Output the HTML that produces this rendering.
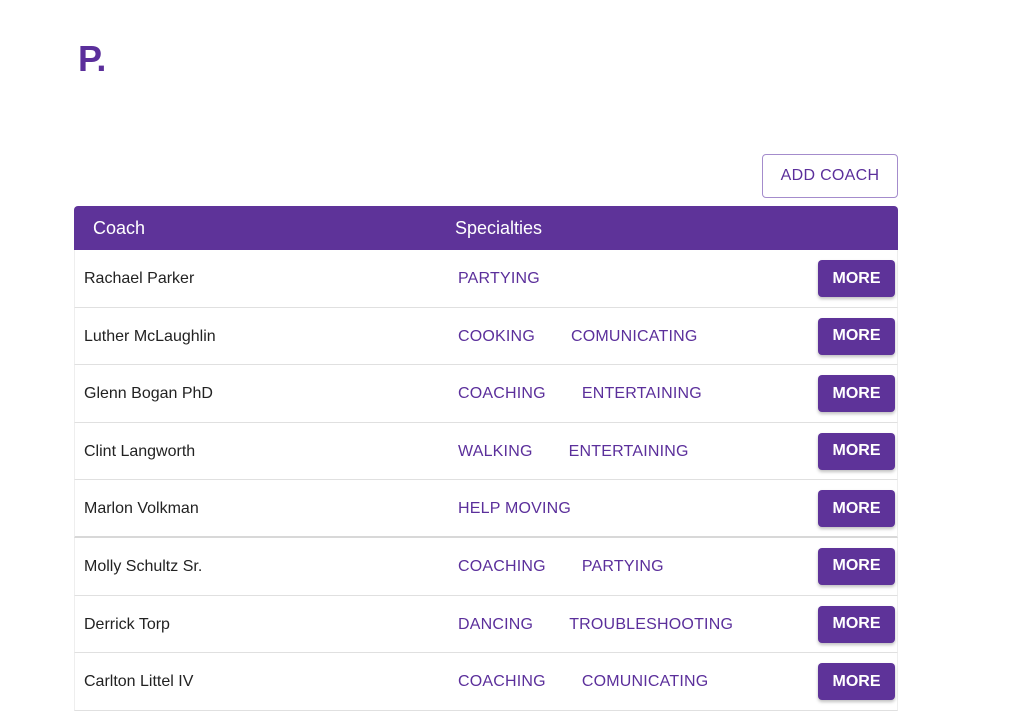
<!DOCTYPE html>
<html><head><style>
body{margin:0;background:#fff;font-family:"Liberation Sans",sans-serif;width:1009px;height:696px;overflow:hidden;position:relative}
.logo{position:absolute;left:78px;top:38px;font-size:36px;font-weight:bold;color:#5b2f9b;letter-spacing:-1px}
.add{position:absolute;left:762px;top:154px;border:1px solid #a48ccc;border-radius:4px;box-sizing:border-box;color:#5b2f9b;font-size:16px;letter-spacing:.3px;display:flex;align-items:center;justify-content:center;width:136px;height:44px}
.tbl{position:absolute;left:74px;top:206px;width:824px}
.hd{height:44px;background:#5e3399;border-radius:4px 4px 0 0;color:#fff;font-size:18px;position:relative}
.hd span{position:absolute;top:12px}
.row{height:56.6px;border-bottom:1px solid #e0e0e0;border-left:1px solid #eee;border-right:1px solid #eee;position:relative}
.nm{position:absolute;left:9px;top:20px;font-size:16px;color:#222}
.sp{position:absolute;left:383px;top:20px;display:flex;gap:36px;color:#5b2f9b;font-size:16px;letter-spacing:.2px}
.mb{position:absolute;left:743px;top:10px;width:77px;height:37px;background:#5e3399;border-radius:4px;color:#fff;font-weight:bold;font-size:16px;display:flex;align-items:center;justify-content:center;box-shadow:0 2px 3px rgba(0,0,0,.25)}
</style></head><body>
<div class="logo">P.</div>
<div class="add">ADD COACH</div>
<div class="tbl">
<div class="hd"><span style="left:19px">Coach</span><span style="left:381px">Specialties</span></div>
<div class="row"><div class="nm">Rachael Parker</div><div class="sp"><span>PARTYING</span></div><div class="mb">MORE</div></div>
<div class="row"><div class="nm">Luther McLaughlin</div><div class="sp"><span>COOKING</span><span>COMUNICATING</span></div><div class="mb">MORE</div></div>
<div class="row"><div class="nm">Glenn Bogan PhD</div><div class="sp"><span>COACHING</span><span>ENTERTAINING</span></div><div class="mb">MORE</div></div>
<div class="row"><div class="nm">Clint Langworth</div><div class="sp"><span>WALKING</span><span>ENTERTAINING</span></div><div class="mb">MORE</div></div>
<div class="row" style="border-bottom:2px solid #d8d8d8;height:55.6px"><div class="nm">Marlon Volkman</div><div class="sp"><span>HELP MOVING</span></div><div class="mb">MORE</div></div>
<div class="row"><div class="nm">Molly Schultz Sr.</div><div class="sp"><span>COACHING</span><span>PARTYING</span></div><div class="mb">MORE</div></div>
<div class="row"><div class="nm">Derrick Torp</div><div class="sp"><span>DANCING</span><span>TROUBLESHOOTING</span></div><div class="mb">MORE</div></div>
<div class="row"><div class="nm">Carlton Littel IV</div><div class="sp"><span>COACHING</span><span>COMUNICATING</span></div><div class="mb">MORE</div></div>
</div>
</body></html>
